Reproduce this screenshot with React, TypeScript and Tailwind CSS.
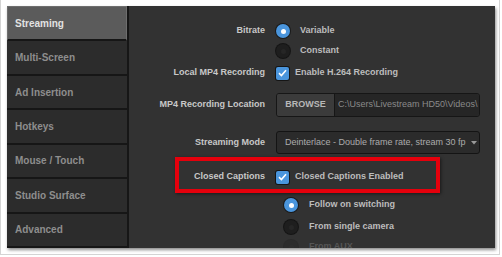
import React from 'react';

const font = { fontFamily: '"Liberation Sans", Arial, sans-serif' };

const navItems = ['Streaming', 'Multi-Screen', 'Ad Insertion', 'Hotkeys', 'Mouse / Touch', 'Studio Surface', 'Advanced'];

const Radio: React.FC<{ on?: boolean }> = ({ on }) =>
  on ? (
    <span className="flex h-[14px] w-[14px] items-center justify-center rounded-full bg-[#4a95dc] shadow-[0_0_0_1px_#1a1a1a]">
      <span className="h-[5px] w-[5px] rounded-full bg-white" />
    </span>
  ) : (
    <span className="flex h-[14px] w-[14px] items-center justify-center rounded-full bg-[#1e1e1e] shadow-[0_0_0_1px_#151515]">
      <span className="h-[5px] w-[5px] rounded-full bg-[#262626]" />
    </span>
  );

const Check: React.FC = () => (
  <span className="flex h-[13px] w-[13px] items-center justify-center rounded-[2px] bg-[#4a95dc] shadow-[0_0_0_1px_#151515]">
    <svg width="9" height="8" viewBox="0 0 9 8">
      <path d="M1 4.2 L3.4 6.5 L8 1.2" stroke="white" strokeWidth="1.6" fill="none" />
    </svg>
  </span>
);

const Label: React.FC<{ children?: React.ReactNode }> = ({ children }) => (
  <div className="w-[136px] shrink-0 text-right text-[9px] font-bold text-[#c8c8c8]">{children}</div>
);

export default function App() {
  return (
    <div className="h-[257px] w-[502px] bg-white" style={font}>
      <div className="h-[255px] w-[500px] border border-t-0 border-[#d4d4d4] bg-white pl-[6px] pt-[6px]">
        <div className="flex h-[242px] w-[488px] bg-[#323232] shadow-[1px_2px_3px_rgba(0,0,0,0.45)]">
          {/* sidebar */}
          <div className="flex w-[122px] flex-col border-r-2 border-[#161616] bg-[#2c2c2c]">
            {navItems.map((item, i) => (
              <div
                key={item}
                className={
                  i === 0
                    ? 'flex flex-1 items-center border border-[#6e6e6e] border-b-2 border-b-[#161616] bg-[#5b5b5b] pl-[7px] text-[10px] font-bold text-[#e2e2e2]'
                    : 'flex flex-1 items-center border-b-2 border-[#161616] pl-[8px] text-[10px] font-bold text-[#8e8e8e]'
                }
              >
                {item}
              </div>
            ))}
          </div>

          {/* main */}
          <div className="relative flex-1 overflow-hidden">
            <div className="flex flex-col pt-[15px]">
              <div className="flex h-[20px] items-center gap-[11px]">
                <Label>Bitrate</Label>
                <Radio on />
                <span className="ml-[-1px] text-[9px] font-bold text-[#bdbdbd]">Variable</span>
              </div>
              <div className="flex h-[20px] items-center gap-[11px]">
                <Label />
                <Radio />
                <span className="ml-[-1px] text-[9px] font-bold text-[#bdbdbd]">Constant</span>
              </div>
              <div className="mt-[2px] flex h-[20px] items-center gap-[11px]">
                <Label>Local MP4 Recording</Label>
                <Check />
                <span className="ml-[-5px] text-[9px] font-bold text-[#bdbdbd]">Enable H.264 Recording</span>
              </div>
              <div className="mt-[10px] flex h-[24px] items-center gap-[11px]">
                <Label>MP4 Recording Location</Label>
                <div className="flex h-[24px] w-[204px] overflow-hidden rounded-[3px] border border-[#161616]">
                  <div className="flex w-[58px] items-center justify-center border-r border-[#161616] bg-[#3b3b3b] text-[9px] font-bold text-[#b8b8b8]">
                    BROWSE
                  </div>
                  <div className="flex flex-1 items-center overflow-hidden whitespace-nowrap bg-[#262626] pl-[3px] text-[9px] text-[#8a8a8a]">
                    C:\Users\Livestream HD50\Videos\
                  </div>
                </div>
              </div>
              <div className="mt-[14px] flex h-[23px] items-center gap-[11px]">
                <Label>Streaming Mode</Label>
                <div className="flex h-[23px] w-[204px] items-center rounded-[3px] border border-[#141414] bg-[#2b2b2b] pl-[8px] text-[9px] text-[#ababab]">
                  <span className="whitespace-nowrap">Deinterlace - Double frame rate, stream 30 fp</span>
                  <svg width="6" height="4" viewBox="0 0 6 4" className="ml-[5px]">
                    <path d="M0 0 L6 0 L3 3.5 Z" fill="#9a9a9a" />
                  </svg>
                </div>
              </div>
              <div className="mt-[13px] flex h-[20px] items-center gap-[11px]">
                <Label>Closed Captions</Label>
                <Check />
                <span className="ml-[-5px] text-[9px] font-bold text-[#bdbdbd]">Closed Captions Enabled</span>
              </div>
              <div className="mt-[8px] flex h-[20px] items-center gap-[11px] pl-[155px]">
                <Radio on />
                <span className="text-[9px] font-bold text-[#bdbdbd]">Follow on switching</span>
              </div>
              <div className="mt-[2px] flex h-[20px] items-center gap-[11px] pl-[155px]">
                <Radio />
                <span className="text-[9px] font-bold text-[#bdbdbd]">From single camera</span>
              </div>
              <div className="flex h-[20px] items-center gap-[11px] pl-[155px] opacity-25">
                <Radio />
                <span className="text-[9px] font-bold text-[#bdbdbd]">From AUX</span>
              </div>
            </div>

            {/* annotation */}
            <div className="absolute left-[46px] top-[151px] h-[36px] w-[265px] border-4 border-[#e5000c] shadow-[1px_1px_3px_rgba(0,0,0,0.5)]" />
          </div>
        </div>
      </div>
    </div>
  );
}
